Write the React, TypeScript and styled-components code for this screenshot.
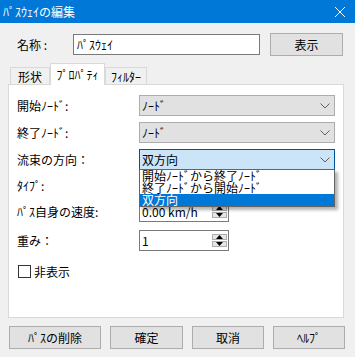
import React from "react";
import styled, { createGlobalStyle } from "styled-components";

const GlobalStyle = createGlobalStyle`
  html, body { margin: 0; padding: 0; background: #f0f0f0; }
  body {
    font-family: "Noto Sans CJK JP", "Noto Sans", sans-serif;
    font-size: 12px;
    color: #000;
  }
  * { box-sizing: border-box; }
`;

const Window = styled.div`
  width: 355px;
  height: 357px;
  background: #f0f0f0;
  display: flex;
  flex-direction: column;
  overflow: hidden;
`;

const TitleBar = styled.div`
  height: 23px;
  flex-shrink: 0;
  background: #0078d7;
  color: #fff;
  display: flex;
  align-items: center;
  justify-content: space-between;
  padding: 0 10px 0 3px;
  font-size: 12px;
  line-height: 12px;
`;

const NameRow = styled.div`
  display: flex;
  align-items: center;
  height: 23px;
  margin-top: 10px;
  padding-left: 17px;
`;

const Label = styled.span<{ $w: number }>`
  width: ${(p) => p.$w}px;
  flex-shrink: 0;
  line-height: 14px;
  white-space: nowrap;
`;

const TextBox = styled.div`
  width: 187px;
  height: 21px;
  border: 1px solid #7a7a7a;
  background: #fff;
  padding-left: 3px;
  display: flex;
  align-items: center;
  line-height: 14px;
`;

const Button = styled.div<{ $w: number; $ml?: number }>`
  width: ${(p) => p.$w}px;
  height: 23px;
  margin-left: ${(p) => p.$ml ?? 0}px;
  background: #e1e1e1;
  border: 1px solid #adadad;
  display: flex;
  align-items: center;
  justify-content: center;
  line-height: 14px;
  flex-shrink: 0;
`;

const TabStrip = styled.div`
  display: flex;
  align-items: flex-end;
  height: 21px;
  margin-top: 7px;
  padding-left: 10px;
  position: relative;
  z-index: 2;
`;

const Tab = styled.div<{ $w: number; $active?: boolean }>`
  width: ${(p) => p.$w}px;
  height: ${(p) => (p.$active ? 22 : 17)}px;
  margin-bottom: ${(p) => (p.$active ? -1 : 0)}px;
  background: ${(p) => (p.$active ? "#fff" : "#f0f0f0")};
  border: 1px solid #d9d9d9;
  border-bottom: none;
  display: flex;
  align-items: center;
  justify-content: center;
  line-height: 14px;
  padding-top: ${(p) => (p.$active ? 0 : 1)}px;
`;

const Panel = styled.div`
  margin-left: 8px;
  width: 336px;
  height: 234px;
  background: #fff;
  border: 1px solid #d9d9d9;
  padding: 10px 0 0 8px;
  position: relative;
  z-index: 1;
`;

const FieldRow = styled.div<{ $mt: number }>`
  display: flex;
  align-items: center;
  height: 21px;
  margin-top: ${(p) => p.$mt}px;
`;

const Select = styled.div<{ $focused?: boolean }>`
  position: relative;
  width: 196px;
  height: 21px;
  border: 1px solid ${(p) => (p.$focused ? "#005499" : "#adadad")};
  background: ${(p) => (p.$focused ? "#cce4f7" : "#e1e1e1")};
  display: flex;
  align-items: center;
  justify-content: space-between;
  padding: 0 4px 0 2px;
  line-height: 14px;
`;

const DropList = styled.div`
  position: absolute;
  top: 19px;
  left: -1px;
  width: 196px;
  background: #fff;
  border: 1px solid #646464;
  box-shadow: 3px 3px 3px rgba(0, 0, 0, 0.3);
  z-index: 10;
`;

const DropItem = styled.div<{ $selected?: boolean }>`
  height: 12px;
  line-height: 12px;
  padding-left: 2px;
  white-space: nowrap;
  background: ${(p) => (p.$selected ? "#0078d7" : "#fff")};
  color: ${(p) => (p.$selected ? "#fff" : "#000")};
`;

const SpinBox = styled.div`
  width: 90px;
  height: 21px;
  border: 1px solid #7a7a7a;
  background: #fff;
  display: flex;
  align-items: center;
  justify-content: space-between;
  padding: 0 1px 0 2px;
  line-height: 14px;
`;

const SpinColumn = styled.div`
  display: flex;
  flex-direction: column;
  gap: 1px;
`;

const SpinButton = styled.div`
  width: 15px;
  height: 6px;
  background: #e6e6e6;
  border: 1px solid #adadad;
  display: flex;
  align-items: center;
  justify-content: center;
`;

const CheckRow = styled.div`
  display: flex;
  align-items: center;
  margin-top: 14px;
  height: 13px;
`;

const CheckBox = styled.div`
  width: 13px;
  height: 13px;
  margin-left: 1px;
  border: 1px solid #333;
  background: #fff;
`;

const CheckText = styled.span`
  margin-left: 3px;
  line-height: 14px;
`;

const ButtonBar = styled.div`
  display: flex;
  gap: 9px;
  margin-top: 8px;
  padding-left: 9px;
`;

const Chevron = () => (
  <svg width="10" height="6" viewBox="0 0 10 6">
    <polyline points="0.5,0.5 5,5 9.5,0.5" fill="none" stroke="#606060" strokeWidth="1" />
  </svg>
);

const Triangle = ({ up }: { up?: boolean }) => (
  <svg width="7" height="4" viewBox="0 0 7 4">
    <polygon points={up ? "3.5,0 7,4 0,4" : "0,0 7,0 3.5,4"} fill="#000" />
  </svg>
);

const CloseIcon = () => (
  <svg width="10" height="10" viewBox="0 0 10 10">
    <line x1="0" y1="0" x2="10" y2="10" stroke="#fff" strokeWidth="1" />
    <line x1="10" y1="0" x2="0" y2="10" stroke="#fff" strokeWidth="1" />
  </svg>
);

export default function App() {
  return (
    <>
      <GlobalStyle />
      <Window>
        <TitleBar>
          <span>ﾊﾟｽｳｪｲの編集</span>
          <CloseIcon />
        </TitleBar>

        <NameRow>
          <Label $w={56}>名称 :</Label>
          <TextBox>ﾊﾟｽｳｪｲ</TextBox>
          <Button $w={73} $ml={10}>表示</Button>
        </NameRow>

        <TabStrip>
          <Tab $w={40}>形状</Tab>
          <Tab $w={55} $active>ﾌﾟﾛﾊﾟﾃｨ</Tab>
          <Tab $w={42}>ﾌｨﾙﾀｰ</Tab>
        </TabStrip>

        <Panel>
          <FieldRow $mt={0}>
            <Label $w={122}>開始ﾉｰﾄﾞ:</Label>
            <Select>
              <span>ﾉｰﾄﾞ</span>
              <Chevron />
            </Select>
          </FieldRow>
          <FieldRow $mt={6}>
            <Label $w={122}>終了ﾉｰﾄﾞ:</Label>
            <Select>
              <span>ﾉｰﾄﾞ</span>
              <Chevron />
            </Select>
          </FieldRow>
          <FieldRow $mt={6}>
            <Label $w={122}>流束の方向：</Label>
            <Select $focused>
              <span>双方向</span>
              <Chevron />
              <DropList>
                <DropItem>開始ﾉｰﾄﾞから終了ﾉｰﾄﾞ</DropItem>
                <DropItem>終了ﾉｰﾄﾞから開始ﾉｰﾄﾞ</DropItem>
                <DropItem $selected>双方向</DropItem>
              </DropList>
            </Select>
          </FieldRow>
          <FieldRow $mt={5}>
            <Label $w={122}>ﾀｲﾌﾟ:</Label>
            <Select>
              <span></span>
              <Chevron />
            </Select>
          </FieldRow>
          <FieldRow $mt={5}>
            <Label $w={122}>ﾊﾟｽ自身の速度:</Label>
            <SpinBox>
              <span>0.00 km/h</span>
              <SpinColumn>
                <SpinButton><Triangle up /></SpinButton>
                <SpinButton><Triangle /></SpinButton>
              </SpinColumn>
            </SpinBox>
          </FieldRow>
          <FieldRow $mt={8}>
            <Label $w={122}>重み：</Label>
            <SpinBox>
              <span>1</span>
              <SpinColumn>
                <SpinButton><Triangle up /></SpinButton>
                <SpinButton><Triangle /></SpinButton>
              </SpinColumn>
            </SpinBox>
          </FieldRow>
          <CheckRow>
            <CheckBox />
            <CheckText>非表示</CheckText>
          </CheckRow>
        </Panel>

        <ButtonBar>
          <Button $w={92}>ﾊﾟｽの削除</Button>
          <Button $w={73}>確定</Button>
          <Button $w={72}>取消</Button>
          <Button $w={72}>ﾍﾙﾌﾟ</Button>
        </ButtonBar>
      </Window>
    </>
  );
}
